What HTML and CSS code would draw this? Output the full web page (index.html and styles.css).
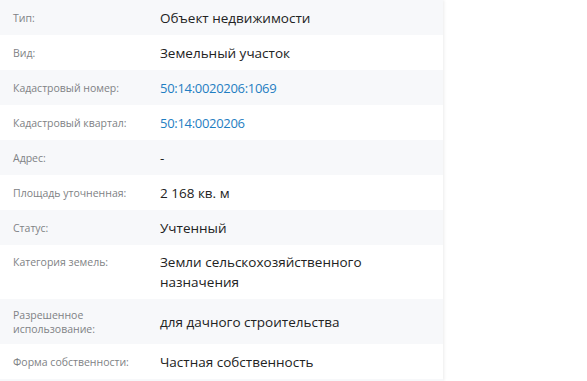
FILE: index.html
```html
<!DOCTYPE html>
<html lang="ru">
<head>
<meta charset="utf-8">
<title>Объект</title>
<link rel="stylesheet" href="styles.css">
</head>
<body>
<div class="panel">
  <div class="row"><div class="label">Тип:</div><div class="value">Объект недвижимости</div></div>
  <div class="row"><div class="label">Вид:</div><div class="value">Земельный участок</div></div>
  <div class="row"><div class="label">Кадастровый номер:</div><div class="value"><a class="link" href="#">50:14:0020206:1069</a></div></div>
  <div class="row"><div class="label">Кадастровый квартал:</div><div class="value"><a class="link" href="#">50:14:0020206</a></div></div>
  <div class="row"><div class="label">Адрес:</div><div class="value">-</div></div>
  <div class="row"><div class="label">Площадь уточненная:</div><div class="value">2 168 кв. м</div></div>
  <div class="row"><div class="label">Статус:</div><div class="value">Учтенный</div></div>
  <div class="row row-top"><div class="label">Категория земель:</div><div class="value">Земли сельскохозяйственного<br>назначения</div></div>
  <div class="row row-tall"><div class="label">Разрешенное<br>использование:</div><div class="value">для дачного строительства</div></div>
  <div class="row"><div class="label">Форма собственности:</div><div class="value">Частная собственность</div></div>
  <div class="row row-end"></div>
</div>
</body>
</html>
```
FILE: styles.css
```css
html, body {
  margin: 0;
  padding: 0;
  background: #ffffff;
}
body {
  font-family: "Open Sans", "Noto Sans", sans-serif;
  color: #222;
  overflow: hidden;
  height: 381px;
}
.panel {
  width: 443px;
  height: 381px;
  overflow: hidden;
  background: #fff;
  box-shadow: 1px 0 3px rgba(0,0,0,0.08);
}
.row {
  display: flex;
  align-items: center;
  box-sizing: border-box;
  min-height: 35px;
  padding: 7px 0 7px 13px;
}
.row:nth-child(odd) {
  background: #f7f8fa;
}
.row-tall {
  min-height: 45px;
}
.row-top .label {
  align-self: flex-start;
  margin-top: 3px;
}
.label {
  flex: 0 0 147px;
  font-size: 10.5px;
  line-height: 14px;
  color: #808285;
}
.value {
  font-size: 13.5px;
  line-height: 20px;
  color: #222;
}
.link {
  color: #1f7ec2;
  text-decoration: none;
  font-size: 13px;
  letter-spacing: -0.3px;
}
```
